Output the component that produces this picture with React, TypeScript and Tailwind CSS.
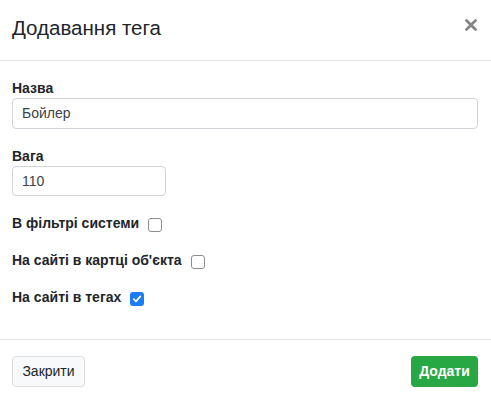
import React from "react";

function Box({ checked }: { checked?: boolean }) {
  if (checked) {
    return (
      <span className="mt-[5px] ml-[9px] flex h-[14px] w-[14px] shrink-0 items-center justify-center rounded-[3px] bg-[#1c7cf4]">
        <svg width="10" height="10" viewBox="0 0 10 10">
          <path d="M1.8 5.2 L4 7.4 L8.3 2.4" fill="none" stroke="#fff" strokeWidth="1.7" strokeLinecap="round" strokeLinejoin="round" />
        </svg>
      </span>
    );
  }
  return <span className="mt-[5px] ml-[9px] block h-[14px] w-[14px] shrink-0 rounded-[3px] border border-[#8c8c8c] bg-white" />;
}

export default function App() {
  return (
    <div className="w-[491px] bg-white font-['Liberation_Sans',Arial,sans-serif] text-[#212529]">
      <div className="flex h-[61px] items-start justify-between border-b border-[#e6e6e6] pl-3 pr-[14px] pt-[13px]">
        <h5 className="text-[20.5px] leading-[30px] font-normal">Додавання тега</h5>
        <svg className="mt-[6px]" width="12" height="12" viewBox="0 0 12 12" aria-label="close">
          <path d="M1.5 1.5 L10.5 10.5 M10.5 1.5 L1.5 10.5" stroke="#858585" strokeWidth="2.8" strokeLinecap="round" />
        </svg>
      </div>
      <div className="pl-3 pr-[13px] pt-[17px] pb-[16px]">
        <label className="block text-[14px] leading-[20px] font-bold">Назва</label>
        <div className="flex h-[31px] w-full items-center rounded-[4px] border border-[#d0d4d8] px-[9px] text-[14px] text-[#3d4247]">Бойлер</div>
        <label className="mt-[17px] block text-[14px] leading-[20px] font-bold">Вага</label>
        <div className="flex h-[30px] w-[154px] items-center rounded-[4px] border border-[#d0d4d8] px-[9px] text-[14px] text-[#3d4247]">110</div>
        <div className="mt-[17px] flex flex-col gap-[17px]">
          <div className="flex items-start text-[14px] leading-[20px] font-bold">
            <span>В фільтрі системи</span>
            <Box />
          </div>
          <div className="flex items-start text-[14px] leading-[20px] font-bold">
            <span>На сайті в картці об'єкта</span>
            <Box />
          </div>
          <div className="flex items-start text-[14px] leading-[20px] font-bold">
            <span>На сайті в тегах</span>
            <Box checked />
          </div>
        </div>
        <div className="h-[16px]" />
      </div>
      <div className="flex items-center justify-between border-t border-[#e6e6e6] pl-3 pr-[13px] pt-4 pb-4">
        <button className="flex h-[31px] w-[73px] items-center justify-center rounded-[4px] border border-[#dadcde] bg-[#f8f9fa] text-[14px] text-[#212529]">Закрити</button>
        <button className="flex h-[31px] w-[67px] items-center justify-center rounded-[4px] bg-[#28a745] text-[14px] font-bold text-white">Додати</button>
      </div>
    </div>
  );
}
